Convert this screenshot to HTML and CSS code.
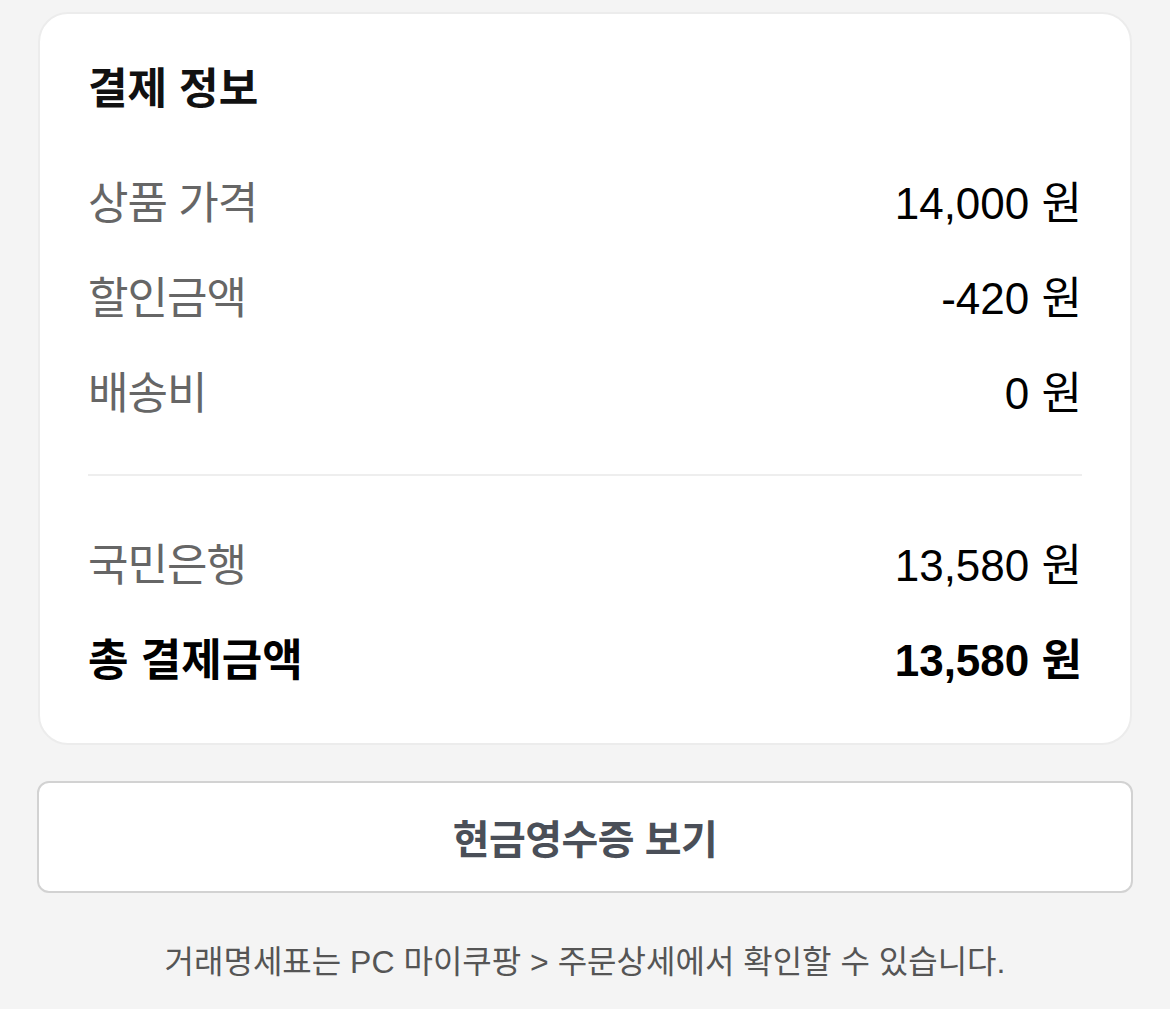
FILE: index.html
```html
<!DOCTYPE html>
<html lang="ko">
<head>
    <meta charset="UTF-8">
    <meta name="viewport" content="width=device-width, initial-scale=1.0">
    <title>결제 정보</title>
    <link rel="stylesheet" href="styles.css">
</head>
<body>
    <div class="page">
        <section class="card">
            <h2 class="card-title">결제 정보</h2>

            <div class="row">
                <span class="label">상품 가격</span>
                <span class="value">14,000 원</span>
            </div>
            <div class="row">
                <span class="label">할인금액</span>
                <span class="value">-420 원</span>
            </div>
            <div class="row">
                <span class="label">배송비</span>
                <span class="value">0 원</span>
            </div>

            <hr class="divider">

            <div class="row">
                <span class="label">국민은행</span>
                <span class="value">13,580 원</span>
            </div>
            <div class="row total">
                <span class="label">총 결제금액</span>
                <span class="value">13,580 원</span>
            </div>
        </section>

        <button class="receipt-btn" type="button">현금영수증 보기</button>

        <p class="note">거래명세표는 PC 마이쿠팡 &gt; 주문상세에서 확인할 수 있습니다.</p>
    </div>
</body>
</html>
```

FILE: styles.css
```css
body {
    margin: 0;
    background-color: #f4f4f4;
    font-family: 'Liberation Sans', 'Noto Sans CJK KR', sans-serif;
    color: #111;
}

.page {
    padding: 12px 38px 0;
}

/* Payment card */
.card {
    background-color: #fff;
    border: 2px solid #ececec;
    border-radius: 30px;
    padding: 47px 48px 39px;
}

.card-title {
    margin: 0 0 35px;
    font-size: 43px;
    line-height: 56px;
    font-weight: 700;
    color: #111;
}

.row {
    display: flex;
    align-items: center;
    justify-content: space-between;
    height: 95px;
}

.label {
    font-size: 44px;
    color: #666;
    letter-spacing: -1px;
}

.value {
    font-size: 44px;
    color: #000;
}

.row.total .label,
.row.total .value {
    font-weight: 700;
    color: #000;
    letter-spacing: 0;
}

.divider {
    border: none;
    height: 2px;
    background-color: #eee;
    margin: 37px 0 38px;
}

/* Receipt button */
.receipt-btn {
    display: block;
    width: calc(100% + 2px);
    margin: 36px -1px 0;
    height: 112px;
    background-color: #fff;
    border: 2px solid #d2d2d2;
    border-radius: 12px;
    font-family: inherit;
    font-size: 40px;
    font-weight: 700;
    color: #4a4f58;
    letter-spacing: -0.5px;
    cursor: pointer;
}

.note {
    margin: 43px 0 0;
    text-align: center;
    font-size: 32px;
    color: #555;
}
```
